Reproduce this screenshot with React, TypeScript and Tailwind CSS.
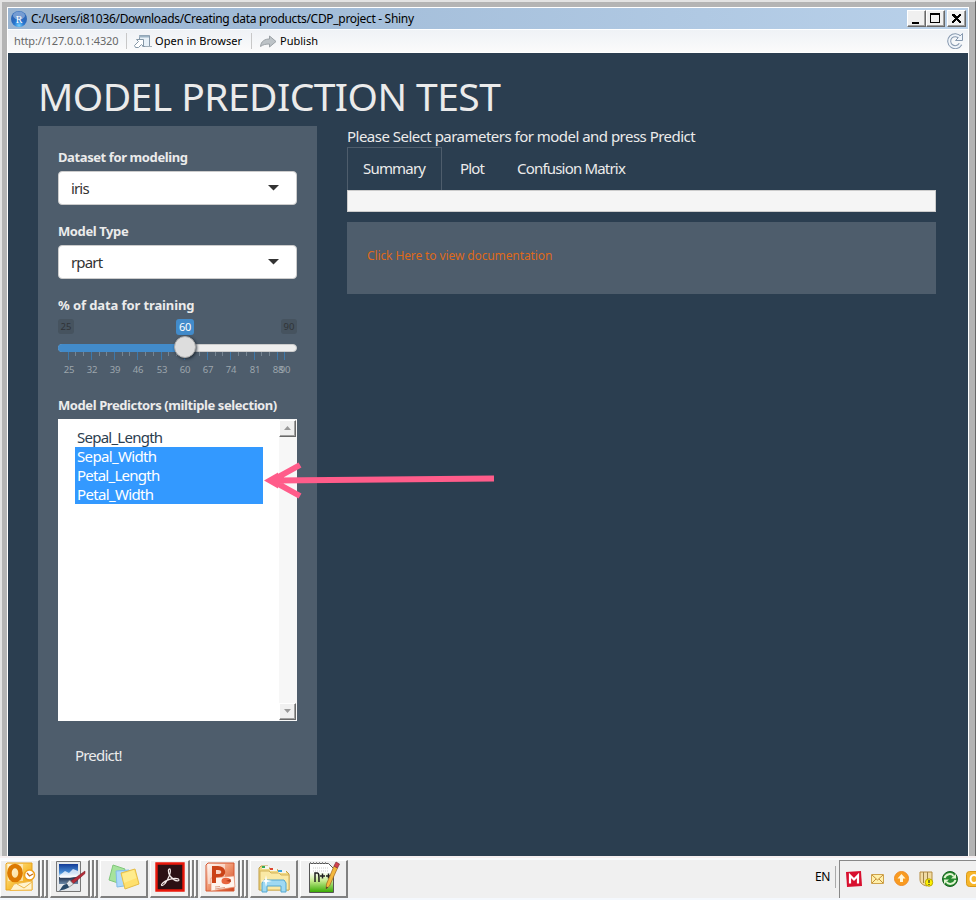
import React from 'react';

const ticks = [25, 32, 39, 46, 53, 60, 67, 74, 81];
const tickX = [10, 33, 56, 79, 103, 126, 149, 172, 196, 219, 226];
const minor = [17, 25, 41, 48, 64, 71, 87, 95, 110, 118, 133, 141, 157, 164, 180, 188, 203, 211];

function Caret() {
  return (
    <svg width="11" height="6" viewBox="0 0 11 6">
      <path d="M0 0h11L5.5 5.6z" fill="#333" />
    </svg>
  );
}

function SelectBox({ value }: { value: string }) {
  return (
    <div className="flex h-[34px] items-center justify-between rounded-[4px] border border-[#ccc] bg-white pl-3 pr-[17px] text-[15px] text-[#333]">
      <span className="tracking-[-0.85px]">{value}</span>
      <Caret />
    </div>
  );
}

function Label({ children, className }: { children: React.ReactNode; className: string }) {
  return <div className={`h-7 whitespace-nowrap text-[13px] font-bold leading-7 text-[#ebebeb] ${className}`}>{children}</div>;
}

function ScrollButton({ down }: { down?: boolean }) {
  return (
    <div className="flex h-[17px] w-[17px] items-center justify-center border border-b-[#696969] border-l-white border-r-[#696969] border-t-white bg-[#f0f0f0] shadow-[inset_-1px_-1px_0_#a0a0a0]">
      <svg width="8" height="5" viewBox="0 0 8 5">
        <path d={down ? 'M0 0h7L3.5 4z' : 'M0 4h7L3.5 0z'} fill="#999" />
      </svg>
    </div>
  );
}

function WinButton({ children, className = '' }: { children: React.ReactNode; className?: string }) {
  return (
    <div className={`h-[17px] w-[19px] border border-b-[#696969] border-l-white border-r-[#696969] border-t-white bg-[#f0f0f0] shadow-[inset_-1px_-1px_0_#a0a0a0] ${className}`}>
      <svg width="17" height="15" viewBox="0 0 17 15" shapeRendering="crispEdges">{children}</svg>
    </div>
  );
}

function TaskButton({ children, stack = 0 }: { children: React.ReactNode; stack?: number }) {
  return (
    <div className="flex h-[38px]">
      <div className={`flex h-[38px] items-center justify-center border-b-2 border-l border-r-2 border-t border-b-[#808080] border-l-white border-r-[#808080] border-t-white bg-[#f0f0f0] pb-[3px] ${stack ? 'w-[40px]' : 'w-[48px]'}`}>
        {children}
      </div>
      {stack > 0 && <div className="h-[38px] w-[4px] border-b-2 border-l border-r-2 border-b-[#808080] border-l-white border-r-[#808080] bg-[#f0f0f0]" />}
      {stack > 0 && <div className="h-[38px] w-[4px] border-b-2 border-l border-r-2 border-b-[#808080] border-l-white border-r-[#808080] bg-[#f0f0f0]" />}
    </div>
  );
}

function OutlookIcon() {
  return (
    <svg width="32" height="32" viewBox="0 0 32 32">
      <defs>
        <linearGradient id="ol" x1="0" y1="0" x2="1" y2="1"><stop stopColor="#fff2c4" /><stop offset=".5" stopColor="#f9c33f" /><stop offset="1" stopColor="#e99a12" /></linearGradient>
      </defs>
      <path d="M3 2h25v27H2V3z" fill="url(#ol)" stroke="#e9a31c" />
      <path d="M4 3h15v17H4z" fill="#fff" opacity=".5" />
      <path d="M10 23l18-3v9l-22 .500z" fill="#fff3cf" stroke="#f0b848" />
      <path d="M13 23l7 4 8-6" fill="none" stroke="#edb84b" />
      <ellipse cx="11" cy="12" rx="5.6" ry="7" fill="none" stroke="#dc7900" strokeWidth="4.6" />
      <circle cx="25.500" cy="14" r="5" fill="#fff" stroke="#f0a01c" strokeWidth="1.5" />
      <path d="M23 12l2.500 3 3.500-2" fill="none" stroke="#c46b13" strokeWidth="1.3" />
    </svg>
  );
}

function PaintIcon() {
  return (
    <svg width="32" height="32" viewBox="0 0 32 32">
      <defs><linearGradient id="sky" x1="0" y1="0" x2="0" y2="1"><stop stopColor="#123b97" /><stop offset=".45" stopColor="#4b92d8" /><stop offset=".65" stopColor="#fff" /><stop offset=".68" stopColor="#23334f" /><stop offset="1" stopColor="#6d8aa8" /></linearGradient></defs>
      <path d="M2.500 .5h24v30h-24z" fill="#e4e7ea" stroke="#777" />
      <path d="M5 3h19v20H5z" fill="url(#sky)" />
      <path d="M6 14l5-4 4 2 4-4 5 2v5l-8 2H6z" fill="#fff" opacity=".75" />
      <path d="M31 10L17 20l2 3 12-10.500z" fill="#b42b37" stroke="#711923" strokeWidth=".5" />
      <path d="M15.500 19l4 4-5 3.500-2-4z" fill="#dfe4e9" stroke="#777" strokeWidth=".7" />
      <path d="M13 23l2 3c-3 3-6 2-10 4 3-3 3-7 8-7z" fill="#294968" />
    </svg>
  );
}

function NotesIcon() {
  return (
    <svg width="34" height="32" viewBox="0 0 34 32">
      <path d="M6 4l12 4-4 15L2 19z" fill="#a6e39c" stroke="#80c77b" />
      <path d="M9 10l13-1 2 15-14 2z" fill="#add9fb" stroke="#82bce8" />
      <path d="M14 12l14-4 4 15-14 5z" fill="#ffe06d" stroke="#e5bd47" />
      <path d="M15 13l12-4 2.500 8-12.500 5z" fill="#fff3a4" opacity=".6" />
    </svg>
  );
}

function AcrobatIcon() {
  return (
    <svg width="30" height="30" viewBox="0 0 30 30">
      <path d="M1.500 1.500h27v27h-27z" fill="#2c1014" stroke="#e9170b" strokeWidth="2.4" />
      <path d="M6.500 22.500c3-4.500 13-7.500 17-5.500 2 2.500-3 3.500-8-2.500-3.500-5-2-8-.500-7.500 1.500 3-2 11-5 14.500-2 2.500-4 2.500-3.500 1z" fill="none" stroke="#f3e9e8" strokeWidth="1.2" />
    </svg>
  );
}

function PowerPointIcon() {
  return (
    <svg width="32" height="32" viewBox="0 0 32 32">
      <defs><linearGradient id="pp" x1="0" y1="0" x2="1" y2="1"><stop stopColor="#fff1e9" /><stop offset=".5" stopColor="#ee936c" /><stop offset="1" stopColor="#cc4320" /></linearGradient></defs>
      <path d="M4 2h26v28H2V4z" fill="url(#pp)" stroke="#d65731" />
      <path d="M4 3h17v20H4z" fill="#fff" opacity=".5" />
      <path d="M10 22V7h4c7 0 7 8 0 8h-4" fill="none" stroke="#cb4217" strokeWidth="4" />
      <path d="M7 17l23-2 1 11-24 4z" fill="#fff4ed" stroke="#e69070" strokeWidth=".7" />
      <path d="M10 16v6" stroke="#cb4217" strokeWidth="4" />
      <ellipse cx="22" cy="20" rx="4.500" ry="3.200" fill="#e8653f" />
      <path d="M22 20l4.500-2 .500 3z" fill="#b23b18" />
      <path d="M11 26l5-.500M11 28l10-1.500" stroke="#dca089" />
    </svg>
  );
}

function FoldersIcon() {
  return (
    <svg width="34" height="32" viewBox="0 0 34 32">
      <path d="M2 29V7l2-2h7l2 3h7l1 2h8l3 3v16z" fill="#efd984" stroke="#c29d43" />
      <path d="M5 5h7v3H5z" fill="#f5f5ee" /><path d="M5 5h3v2H5z" fill="#35aa56" /><path d="M13 7h7v3h-7z" fill="#f5f5ee" /><path d="M13 7h3v2h-3z" fill="#df4631" /><path d="M21 9h8v3h-8z" fill="#f5f5ee" /><path d="M21 9h4v2h-4z" fill="#35a4dd" />
      <path d="M3 10h9l2 2h8l2 2h8v15H3z" fill="#fae9a5" stroke="#d4b35a" />
      <path d="M5 31V22l2-3h20l2 3v9h-5v-6H10v6z" fill="#9ed9f3" stroke="#55a7cf" />
      <path d="M9 14l1 5 5 1-5 1-1 5-1-5-4-1 4-1z" fill="#fff" />
    </svg>
  );
}

function NotepadIcon() {
  return (
    <svg width="32" height="33" viewBox="0 0 32 33">
      <defs><linearGradient id="np" x1="0" y1="0" x2="0" y2="1"><stop offset=".3" stopColor="#fff" /><stop offset=".6" stopColor="#c4ea8c" /><stop offset="1" stopColor="#35a900" /></linearGradient></defs>
      <path d="M1.500 2.500h19l5 5v24h-24z" fill="url(#np)" stroke="#555" />
      <path d="M2 2h18" stroke="#888" strokeWidth="2" strokeDasharray="1 2" />
      <path d="M5 7h15M5 10h15" stroke="#ccc" strokeDasharray="1 1" />
      <path d="M7 21v-9h2.500c1.500 0 1.500 2 1.500 9M12 15h5M14.500 12.500v5M18 15h5M20.500 12.500v5" fill="none" stroke="#202020" strokeWidth="1.500" />
      <path d="M26 5l3.500 2-8 18-3.500 3 .500-5z" fill="#f3b83d" stroke="#a2641e" strokeWidth=".7" />
      <path d="M26 5l2-4 3.500 2-2 4z" fill="#d5404d" stroke="#80313b" strokeWidth=".7" /><path d="M18 28l.500-2.500 1.500 1z" fill="#333" />
    </svg>
  );
}

function Taskbar() {
  return (
    <footer className="flex h-11 w-[976px] items-start justify-between border-t-2 border-[#f6eff0] bg-[#f0f0f0] shadow-[inset_0_2px_0_#f8fafd,inset_0_-2px_0_#f4f8fd]">
      <div className="flex gap-[2px] pt-[2px]">
        <TaskButton stack={2}><OutlookIcon /></TaskButton>
        <TaskButton stack={2}><PaintIcon /></TaskButton>
        <TaskButton><NotesIcon /></TaskButton>
        <TaskButton stack={2}><AcrobatIcon /></TaskButton>
        <TaskButton stack={2}><PowerPointIcon /></TaskButton>
        <TaskButton><FoldersIcon /></TaskButton>
        <TaskButton><NotepadIcon /></TaskButton>
      </div>
      <div className="flex h-[40px] items-start pt-[2px]">
        <div className="mt-[6px] flex h-[22px] w-[21px] items-center border-r border-[#aaa] text-[12px] tracking-[-0.4px] text-black">EN</div>
        <div className="ml-[3px] flex h-[38px] w-[137px] items-center overflow-hidden border-l border-t border-[#888] pb-[2px] pl-[6px]">
          <svg className="shrink-0" width="130" height="20" viewBox="0 0 130 20">
            <path d="M0 3l15-1 1 15-15 1z" fill="#d8102f" />
            <path d="M4 14.500V6.500l4 4 4-4v8" fill="none" stroke="#fff" strokeWidth="2.200" />
            <path d="M25.500 5.500h12v9h-12z" fill="#fff0aa" stroke="#cfa34d" /><path d="M26 6l5.500 5L37 6M26 14l4-4M37 14l-4-4" fill="none" stroke="#c38c37" />
            <circle cx="55.500" cy="9.500" r="7" fill="#f99b20" stroke="#ef8c25" /><path d="M55.500 5l4 4.500h-2.500V13h-3V9.500h-2.500z" fill="#fff6dc" />
            <path d="M74 3h12v10l-5 4c-5-1-7-3-7-7z" fill="#f0dba4" stroke="#b68c3e" /><path d="M77.500 3v11M81.500 3v13" stroke="#9e8247" /><circle cx="83" cy="13.500" r="3.700" fill="#fff200" stroke="#b9a700" /><path d="M83 11v3M83 15v1" stroke="#333" strokeWidth="1.200" />
            <circle cx="104" cy="10" r="7.500" fill="#278a30" stroke="#17601e" />
            <path d="M98.500 9c1.500-4.500 7-5 9-2M109.500 11c-1.500 4.500-7 5-9 2" fill="none" stroke="#e4f5d2" strokeWidth="2" /><path d="M110 5v4.500h-5zM98 15v-4.500h5z" fill="#e4f5d2" />
            <rect x="120.500" y="2.500" width="16" height="15" rx="3" fill="#f7b62b" stroke="#d99916" /><ellipse cx="128" cy="10" rx="3.500" ry="4" fill="none" stroke="#fff" strokeWidth="2" />
          </svg>
        </div>
      </div>
    </footer>
  );
}

function Slider() {
  return (
    <div className="relative h-[72px]">
      <span className="absolute left-0 top-0 h-[15px] w-4 rounded-[3px] bg-[#46535f] text-center text-[9.500px] leading-[15px] text-[#303338]">25</span>
      <span className="absolute right-0 top-0 h-[15px] w-4 rounded-[3px] bg-[#46535f] text-center text-[9.500px] leading-[15px] text-[#303338]">90</span>
      <span className="absolute left-[118px] top-0 h-4 w-[18px] rounded-[3px] bg-[#428bca] text-center text-[11px] leading-4 tracking-[-0.3px] text-white">60</span>
      <div className="absolute left-0 top-[25px] h-2 w-full rounded-[4px] border border-[#ccc] bg-[#eee]" />
      <div className="absolute left-0 top-[25px] h-2 w-[126px] rounded-l-[4px] bg-[#428bca]" />
      <svg className="absolute left-0 top-[33px]" width="239" height="8" shapeRendering="crispEdges">
        {tickX.map((x) => <path key={x} d={`M${x + 0.5} 0v8`} stroke="#3d78aa" />)}
        {minor.map((x) => <path key={x} d={`M${x + 0.5} 0v4`} stroke="#758491" />)}
      </svg>
      <div className="absolute left-[116px] top-[17px] h-[22px] w-[22px] rounded-full border border-[#aaa] bg-[#ddd] shadow-[1px_1px_3px_rgba(20,30,40,0.8)]" />
      {[...ticks, 88, 90].map((n, i) => (
        <span key={n} className="absolute top-[43px] w-5 text-center text-[9.500px] leading-[15px] tracking-[-0.2px] text-[#9da6ad]" style={{ left: tickX[i] - 9 }}>{n}</span>
      ))}
    </div>
  );
}

function Sidebar() {
  return (
    <aside className="h-[669px] w-[279px] bg-[#4e5d6c] px-5 pt-[17px]">
      <Label className="tracking-[-0.4px]">Dataset for modeling</Label>
      <SelectBox value="iris" />
      <div className="h-3" />
      <Label className="tracking-[-0.4px]">Model Type</Label>
      <SelectBox value="rpart" />
      <div className="h-3" />
      <Label className="tracking-[-0.1px]">% of data for training</Label>
      <Slider />
      <Label className="tracking-[-0.41px]">Model Predictors (miltiple selection)</Label>
      <div className="flex h-[302px] justify-between bg-white">
        <div className="ml-[17px] mt-[9px] w-[188px] text-[15px] leading-[19px] tracking-[-0.75px] text-[#2b3e50]">
          <div className="pl-[2px]">Sepal_Length</div>
          {['Sepal_Width', 'Petal_Length', 'Petal_Width'].map((s) => <div key={s} className={`bg-[#3399ff] pl-[2px] text-white ${s === 'Petal_Length' ? '' : 'tracking-[-0.65px]'}`}>{s}</div>)}
        </div>
        <div className="flex w-[18px] flex-col justify-between bg-[#f7f7f7] pb-px pt-px">
          <ScrollButton />
          <ScrollButton down />
        </div>
      </div>
      <div className="mt-[23px] pl-[17px] text-[15px] leading-[22px] tracking-[-0.8px] text-[#ebebeb]">Predict!</div>
    </aside>
  );
}

export default function App() {
  return (
    <div className="relative h-[900px] w-[976px] overflow-hidden font-['Noto_Sans',sans-serif]">
      <div className="h-[856px] border-l-2 border-r border-t-2 border-l-[#e3e3e3] border-r-[#696969] border-t-[#e3e3e3]">
        <div className="h-[854px] border-l-[5px] border-r-[6px] border-t-[5px] border-[#b4b4b4] bg-white pl-px pr-px pt-px">
          <header className="flex h-[21px] items-center justify-between bg-gradient-to-r from-[#99b4d1] to-[#b9d1ea] pl-[3px] pr-[2px]">
            <div className="flex items-center">
              <svg width="16" height="16" viewBox="0 0 16 16">
                <defs><radialGradient id="rb" cx=".5" cy=".9"><stop stopColor="#71d0ff" /><stop offset=".6" stopColor="#2778d1" /><stop offset="1" stopColor="#2c68ba" /></radialGradient></defs>
                <circle cx="8" cy="8" r="8" fill="url(#rb)" /><ellipse cx="8" cy="4.500" rx="6" ry="4" fill="#fff" opacity=".35" />
                <text x="4.700" y="11.500" fontFamily="Liberation Serif" fontSize="10" fill="white">R</text>
              </svg>
              <span className="ml-[4px] whitespace-nowrap text-[12px] leading-5 tracking-[-0.31px] text-black">C:/Users/i81036/Downloads/Creating data products/CDP_project - Shiny</span>
            </div>
            <div className="flex">
              <WinButton><path d="M4 11h7v2H4z" /></WinButton>
              <WinButton><path d="M3 2h10v10H3zM4 4v7h8V4z" fillRule="evenodd" /></WinButton>
              <WinButton className="ml-[2px]"><path d="M4 3h2l2.500 2.500L11 3h2v1L10 7.500l3 3V12h-2L8.500 9 6 12H4v-1.500l3-3L4 4z" /></WinButton>
            </div>
          </header>
          <nav className="mt-px flex h-[23px] items-center border-b border-white bg-gradient-to-b from-[#eff2f6] to-[#fbfbfb] pl-[6px] text-[11px] text-black">
            <span className="w-[113px] whitespace-nowrap border-r border-[#c8c8c8] tracking-[-0.14px] text-[#686868]">http://127.0.0.1:4320</span>
            <svg className="ml-[7px]" width="18" height="14" viewBox="0 0 18 14">
              <path d="M5.500 10.500V1.500h10v11h-7" fill="#e8f1f8" stroke="#8799aa" /><path d="M5 2.500h10" stroke="#9db3c4" strokeWidth="2" />
              <path d="M.5 11.500l4-4-2-2h7v7l-2-2-3 3h-3z" fill="#fff" stroke="#8598a7" /><path d="M11 12.500h7" stroke="#a2afb9" />
            </svg>
            <span className="ml-[3px] w-[97px] whitespace-nowrap border-r border-[#c8c8c8] tracking-[0.06px]">Open in Browser</span>
            <svg className="ml-[8px]" width="17" height="14" viewBox="0 0 17 14"><path d="M.5 12.500C1 7 5 5 9.500 5V2L16 7.500 9.500 13v-3C6 10 3 10.500 .5 12.500z" fill="#bdc3c7" stroke="#9ba1a6" /></svg>
            <span className="ml-[3px]">Publish</span>
            <svg className="ml-auto mr-[5px]" width="16" height="16" viewBox="0 0 16 16">
              <path d="M13 4.500A6 6 0 1 0 13.500 11" fill="none" stroke="#8799af" strokeWidth="4" /><path d="M15.500 .5v7h-7z" fill="#eff4fa" stroke="#8799af" /><path d="M13 4.500A6 6 0 1 0 13.500 11" fill="none" stroke="#eff4fa" strokeWidth="2" />
            </svg>
          </nav>
          <main className="h-[803px] bg-[#2b3e50] px-[30px] pt-[14px]">
            <h1 className="mb-px h-[58px] whitespace-nowrap text-[39px] leading-[58px] tracking-[-0.56px] text-[#ebebeb]">MODEL PREDICTION TEST</h1>
            <div className="flex gap-[30px]">
              <Sidebar />
              <section className="w-[589px] text-[15px] text-[#ebebeb]">
                <div className="h-[21px] whitespace-nowrap leading-[21px] tracking-[-0.52px]">Please Select parameters for model and press Predict</div>
                <div className="flex h-[43px] whitespace-nowrap leading-[40px] tracking-[-0.81px]">
                  <div className="w-[95px] border border-b-0 border-[#4e5d6c] pl-[15px]">Summary</div>
                  <div className="ml-[18px] w-[57px] pt-px">Plot</div>
                  <div className="pt-px">Confusion Matrix</div>
                </div>
                <div className="h-[22px] border border-[#ccc] bg-[#f5f5f5]" />
                <div className="mt-[10px] h-[72px] bg-[#4e5d6c] px-5 pt-[24px] text-[12px] leading-5 tracking-[-0.11px] text-[#df691a]">Click Here to view documentation</div>
              </section>
            </div>
          </main>
        </div>
      </div>
      <Taskbar />
      <svg className="absolute left-[262px] top-[460px]" width="236" height="42" viewBox="0 0 236 42">
        <path d="M38 5L10 20.500L38 36M14 20.500L232 18.500" fill="none" stroke="#ff5c8a" strokeWidth="6" /><path d="M2 20.500l14-8v16z" fill="#ff5c8a" />
      </svg>
    </div>
  );
}
